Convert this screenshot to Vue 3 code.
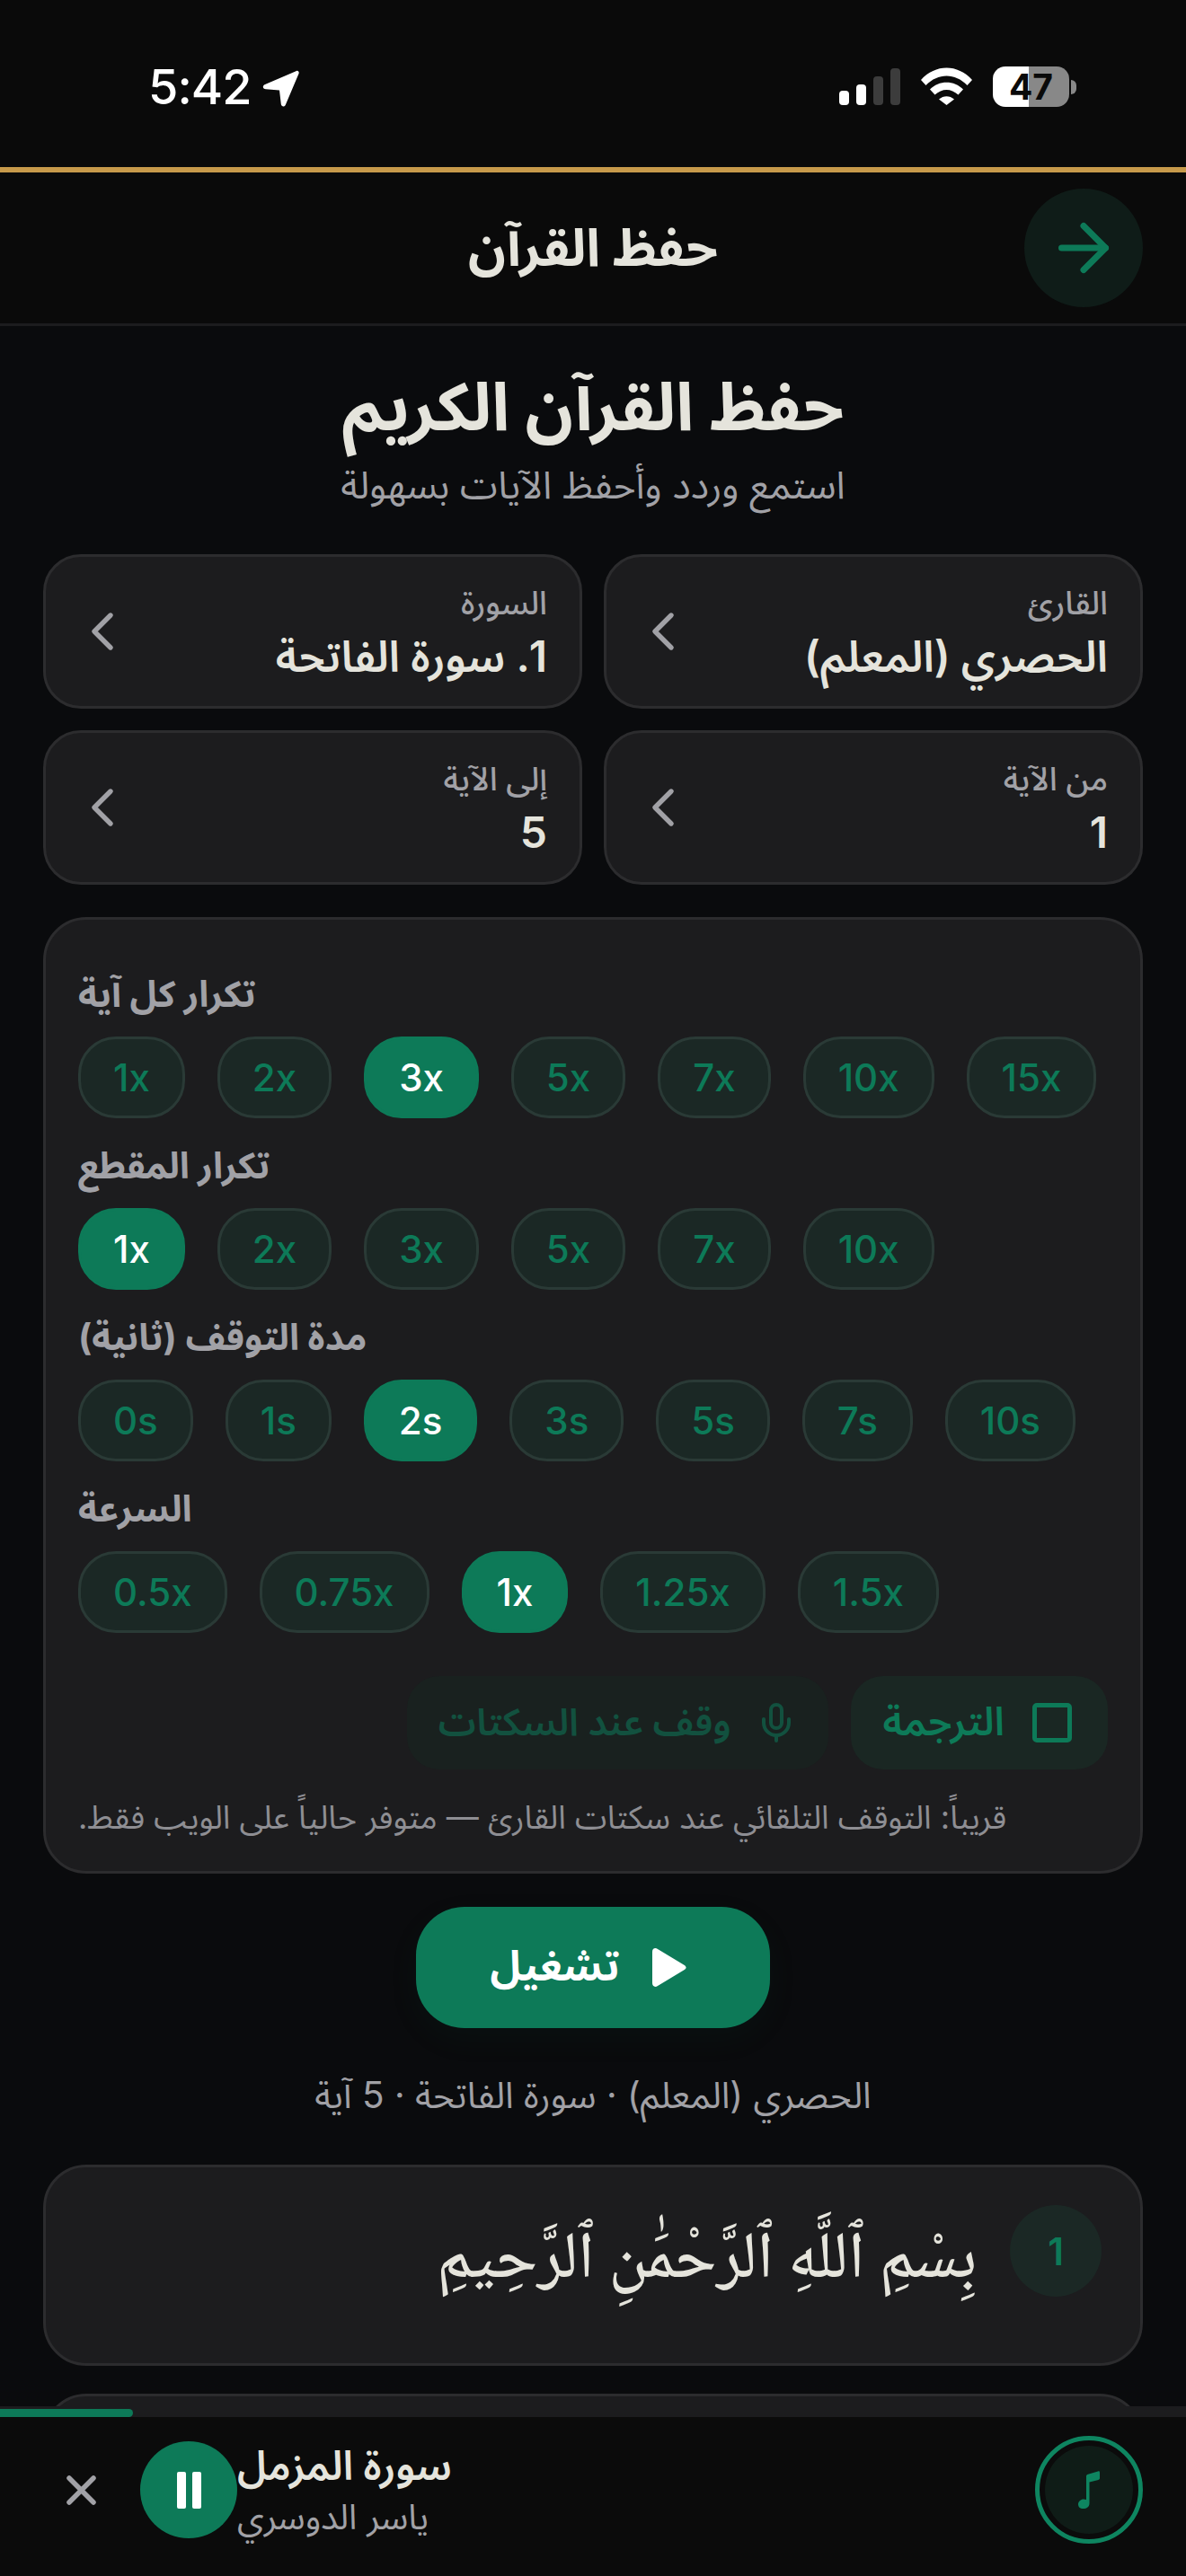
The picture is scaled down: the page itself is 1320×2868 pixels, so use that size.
<script setup>
const fields = [
  { label: 'القارئ', value: 'الحصري (المعلم)' },
  { label: 'السورة', value: '1. سورة الفاتحة' },
  { label: 'من الآية', value: '1' },
  { label: 'إلى الآية', value: '5' }
]
const groups = [
  { label: 'تكرار كل آية', items: ['1x', '2x', '3x', '5x', '7x', '10x', '15x'], active: '3x' },
  { label: 'تكرار المقطع', items: ['1x', '2x', '3x', '5x', '7x', '10x'], active: '1x' },
  { label: 'مدة التوقف (ثانية)', items: ['0s', '1s', '2s', '3s', '5s', '7s', '10s'], active: '2s' },
  { label: 'السرعة', items: ['0.5x', '0.75x', '1x', '1.25x', '1.5x'], active: '1x' }
]
</script>

<template>
  <div class="screen">
    <div class="status">
      <div class="status-left">
        <span class="time">5:42</span>
        <svg class="nav" viewBox="0 0 41 41"><path d="M38 1 3 16c-3.500 1.500-2.500 5 .8 5.300l15.200 1.200 1.800 15.500c.4 3 4 3.300 5 .7L40.500 4c.7-2-.8-3.800-2.500-3Z" fill="#fff"/></svg>
      </div>
      <div class="status-right">
        <div class="signal">
          <i class="b1"></i><i class="b2"></i><i class="b3"></i><i class="b4"></i>
        </div>
        <svg class="wifi" viewBox="0 0 57 42">
          <path d="M0 14 C16 -4 41 -4 57 14L51.500 20C38 6 19 6 5.500 20Z" fill="#fff"/>
          <path d="M10 24.500C20 14 37 14 47 24.500L41.500 30.500C33.500 23 23.500 23 15.500 30.500Z" fill="#fff"/>
          <path d="M20 35.500C25 31 32 31 37 35.500L28.500 42Z" fill="#fff"/>
        </svg>
        <div class="battery">
          <div class="batt-body"><span>47</span></div>
          <div class="batt-nub"></div>
        </div>
      </div>
    </div>
    <div class="gold"></div>

    <header class="topbar">
      <h2>حفظ القرآن</h2>
      <button class="back">
        <svg viewBox="0 0 24 24" width="84" height="84" fill="none" stroke="#0d7a58" stroke-width="2" stroke-linecap="round" stroke-linejoin="round"><path d="M5 12h14"/><path d="m12 5 7 7-7 7"/></svg>
      </button>
    </header>

    <main class="main">
      <h1>حفظ القرآن الكريم</h1>
      <p class="sub">استمع وردد وأحفظ الآيات بسهولة</p>

      <div class="fields">
        <div v-for="f in fields" :key="f.label" class="field">
          <div class="field-text">
            <span class="field-label">{{ f.label }}</span>
            <span class="field-value">{{ f.value }}</span>
          </div>
          <svg viewBox="0 0 24 24" width="72" height="72" fill="none" stroke="#a1a1a6" stroke-width="1.800" stroke-linecap="round" stroke-linejoin="round"><path d="m15 18-6-6 6-6"/></svg>
        </div>
      </div>

      <section class="panel">
        <div v-for="g in groups" :key="g.label" class="group">
          <div class="group-label">{{ g.label }}</div>
          <div class="chips">
            <span v-for="c in g.items" :key="c" class="chip" :class="{ on: c === g.active }">{{ c }}</span>
          </div>
        </div>
        <div class="toggles">
          <div class="toggle dim">
            <span>وقف عند السكتات</span>
            <svg viewBox="0 0 24 24" width="48" height="48" fill="none" stroke="currentColor" stroke-width="2" stroke-linecap="round" stroke-linejoin="round"><path d="M12 2a3 3 0 0 0-3 3v7a3 3 0 0 0 6 0V5a3 3 0 0 0-3-3Z"/><path d="M19 10v2a7 7 0 0 1-14 0v-2"/><path d="M12 19v3"/></svg>
          </div>
          <div class="toggle">
            <span>الترجمة</span>
            <i class="box"></i>
          </div>
        </div>
        <p class="note">قريباً: التوقف التلقائي عند سكتات القارئ — متوفر حالياً على الويب فقط.</p>
      </section>

      <div class="play-wrap">
        <button class="play">
          <span>تشغيل</span>
          <svg viewBox="0 0 38 43" width="38" height="43"><path d="M0 4C0 .6 3 -1 6 1L35 18.500c3.500 2 3.500 4 0 6L6 42C3 44 0 42.400 0 39Z" fill="#fff"/></svg>
        </button>
      </div>
      <p class="caption">الحصري (المعلم) · سورة الفاتحة · 5 آية</p>

      <article class="ayah">
        <div class="ayah-num">1</div>
        <p class="ayah-text">بِسْمِ ٱللَّهِ ٱلرَّحْمَٰنِ ٱلرَّحِيمِ</p>
      </article>
      <article class="ayah next"></article>
    </main>

    <footer class="player">
      <div class="progress"><div class="progress-fill"></div></div>
      <div class="player-row">
        <div class="player-left">
          <svg class="close" viewBox="0 0 33 33" width="33" height="33" fill="none" stroke="#a1a1a6" stroke-width="5.500" stroke-linecap="round"><path d="M3 3l27 27M30 3 3 30"/></svg>
          <div class="pause"><i></i><i></i></div>
          <div class="track">
            <div class="track-title">سورة المزمل</div>
            <div class="track-sub">ياسر الدوسري</div>
          </div>
        </div>
        <div class="disc">
          <div class="disc-in">
            <svg viewBox="0 0 24 42" width="24" height="42"><path d="M9 6C9 4.500 10 4 11 3.700L22 .5C23.500 0 24 .8 24 2V8C24 9 23.500 9.600 22.500 9.900L12.500 12.500V36C12.500 40 9.500 42 5.500 42 2 42 0 40 0 37 0 34 3 31.500 6 31.500 7 31.500 8 31.700 9 32Z" fill="#0e8560"/></svg>
          </div>
        </div>
      </div>
    </footer>
  </div>
</template>

<style>
html, body { margin: 0; background: #0a0b0d; }
</style>

<style scoped>
* { box-sizing: border-box; }
.screen {
  position: relative;
  width: 1320px;
  height: 2868px;
  overflow: hidden;
  background: #0a0b0d;
  color: #e5e4dc;
  font-family: Inter, "Noto Sans Arabic", sans-serif;
}
.status {
  height: 186px;
  background: #0a0a0a;
  display: flex;
  justify-content: space-between;
  padding: 74px 122px 0 165px;
}
.status-left { display: flex; align-items: flex-start; gap: 13px; }
.time { font-size: 54px; font-weight: 500; letter-spacing: -1px; line-height: 46px; color: #fff; }
.nav { width: 41px; height: 41px; margin-top: 4px; }
.status-right { display: flex; align-items: flex-start; }
.signal { display: flex; align-items: flex-end; gap: 8px; height: 41px; margin-top: 2px; }
.signal i { display: block; width: 11px; border-radius: 4px; background: #fff; }
.signal .b1 { height: 16px; }
.signal .b2 { height: 23px; }
.signal .b3 { height: 32px; background: #3c3c3c; }
.signal .b4 { height: 41px; background: #3c3c3c; }
.wifi { width: 57px; height: 42px; margin: 1px 0 0 23px; }
.battery { display: flex; align-items: center; gap: 2px; margin-left: 23px; height: 45px; }
.batt-body {
  width: 85px;
  height: 45px;
  border-radius: 14px;
  background: linear-gradient(90deg, #fff 0 40px, #888 40px);
  display: flex;
  align-items: center;
  justify-content: center;
  color: #0a0a0a;
  font-size: 39px;
  font-weight: 700;
}
.batt-nub { width: 6px; height: 16px; background: #888; border-radius: 0 6px 6px 0; }
.gold { height: 6px; background: #c79a4b; }

.topbar {
  position: relative;
  height: 171px;
  background: #0a0a0a;
  border-bottom: 3px solid #1c1c1e;
  display: flex;
  align-items: center;
  justify-content: center;
}
.topbar h2 { margin: 0; font-size: 58px; font-weight: 700; line-height: 1.2; }
.back {
  position: absolute;
  right: 48px;
  top: 18px;
  width: 132px;
  height: 132px;
  border: 0;
  padding: 0;
  border-radius: 50%;
  background: #0f1c18;
  display: flex;
  align-items: center;
  justify-content: center;
}

.main { padding: 0 48px; }
h1 {
  margin: 47px 0 0;
  font-size: 74px;
  font-weight: 700;
  line-height: 84px;
  text-align: center;
  direction: rtl;
}
.sub {
  margin: 19px 0 0;
  font-size: 42.500px;
  line-height: 54px;
  text-align: center;
  color: #a1a1a6;
  direction: rtl;
}
.fields {
  margin-top: 50px;
  display: grid;
  grid-template-columns: 600px 600px;
  grid-auto-rows: auto;
  gap: 24px;
  direction: rtl;
}
.field {
  height: 172px;
  border: 3px solid #2c2c2e;
  border-radius: 42px;
  background: #1c1c1e;
  padding: 0 36px 0 27px;
  display: flex;
  align-items: center;
  justify-content: space-between;
}
.field-text { display: flex; flex-direction: column; align-items: flex-start; gap: 4px; padding-top: 3px; }
.field-label { font-size: 36px; line-height: 48px; color: #a1a1a6; font-weight: 500; }
.field-value { font-size: 48px; line-height: 63px; font-weight: 600; }

.panel {
  margin-top: 36px;
  height: 1065px;
  border: 3px solid #2c2c2e;
  border-radius: 48px;
  background: #1c1c1e;
  padding: 30px 36px 0;
}
.group { margin-top: 24px; }
.group-label {
  height: 60px;
  line-height: 58px;
  font-size: 40.500px;
  font-weight: 700;
  color: #a1a1a6;
  margin-bottom: 16px;
  text-align: left;
  direction: ltr;
  unicode-bidi: plaintext;
}
.chips { display: flex; gap: 36px; }
.chip {
  height: 91px;
  padding: 0 36px;
  border: 3px solid #2a3a36;
  border-radius: 42px;
  background: #1b2825;
  color: #0d7a58;
  font-size: 42px;
  font-weight: 500;
  display: flex;
  align-items: center;
}
.chip.on { background: #0d7a58; border-color: #0d7a58; color: #fff; }
.toggles {
  margin-top: 48px;
  display: flex;
  justify-content: flex-end;
  gap: 25px;
}
.toggle {
  height: 104px;
  padding: 0 40px 0 36px;
  border-radius: 36px;
  background: #1a2723;
  color: #0d7a58;
  font-size: 44px;
  font-weight: 600;
  display: flex;
  align-items: center;
  gap: 31px;
}
.toggle.dim { background: #19211f; color: #12513f; font-size: 42px; padding: 0 34px 0 35px; gap: 26px; }
.box {
  display: block;
  width: 44px;
  height: 44px;
  border: 5px solid #0d7a58;
  border-radius: 5px;
}
.note {
  margin: 23px 0 0;
  line-height: 60px;
  font-size: 36px;
  color: #8e8e93;
  text-align: left;
  direction: ltr;
  unicode-bidi: plaintext;
}

.play-wrap { margin-top: 37px; display: flex; justify-content: center; }
.play {
  width: 394px;
  height: 135px;
  border: 0;
  border-radius: 54px;
  background: #0d7a58;
  color: #fff;
  font-family: inherit;
  font-size: 46px;
  font-weight: 700;
  padding: 0 10px 0 0;
  display: flex;
  align-items: center;
  justify-content: center;
  gap: 37px;
  box-shadow: 0 12px 36px rgba(13, 122, 88, 0.06);
}
.caption {
  margin: 45px 0 0;
  text-align: center;
  font-size: 40.500px;
  line-height: 60px;
  color: #a1a1a6;
  direction: rtl;
}
.ayah {
  margin-top: 47px;
  height: 224px;
  border: 3px solid #2c2c2e;
  border-radius: 48px;
  background: #1c1c1e;
  direction: rtl;
  padding: 42px 43px 0;
  display: flex;
  align-items: flex-start;
  gap: 37px;
}
.ayah.next { margin-top: 31px; }
.ayah-num {
  flex: none;
  width: 102px;
  height: 102px;
  border-radius: 50%;
  background: #1b2825;
  color: #0d7a58;
  font-size: 42px;
  font-weight: 600;
  display: flex;
  align-items: center;
  justify-content: center;
}
.ayah-text {
  margin: 13px 0 0;
  font-family: "Noto Naskh Arabic", serif;
  font-size: 73px;
  font-weight: 500;
  line-height: 102px;
  color: #e5e4dc;
}

.player {
  position: absolute;
  left: 0;
  right: 0;
  bottom: 0;
  height: 189px;
  background: #0b0b0b;
}
.progress { height: 12px; background: #1c1c1e; padding-top: 3px; }
.progress-fill { width: 148px; height: 9px; background: #0d7a58; border-radius: 0 5px 5px 0; }
.player-row {
  height: 177px;
  padding: 0 48px 15px 74px;
  display: flex;
  align-items: center;
  justify-content: space-between;
}
.player-left { display: flex; align-items: center; }
.pause {
  width: 108px;
  height: 108px;
  margin-left: 49px;
  border-radius: 50%;
  background: #0d7a58;
  display: flex;
  align-items: center;
  justify-content: center;
  gap: 7px;
}
.pause i { display: block; width: 10px; height: 41px; background: #fff; border-radius: 2px; }
.track { direction: ltr; }
.track-title { font-size: 45px; line-height: 60px; font-weight: 600; unicode-bidi: plaintext; text-align: left; }
.track-sub { font-size: 39px; line-height: 54px; color: #a1a1a6; unicode-bidi: plaintext; text-align: left; }
.disc {
  width: 120px;
  height: 120px;
  border: 5px solid #0e8560;
  border-radius: 50%;
  padding: 6px;
}
.disc-in {
  width: 100%;
  height: 100%;
  border-radius: 50%;
  background: #0f1c17;
  display: flex;
  align-items: center;
  justify-content: center;
}
</style>
